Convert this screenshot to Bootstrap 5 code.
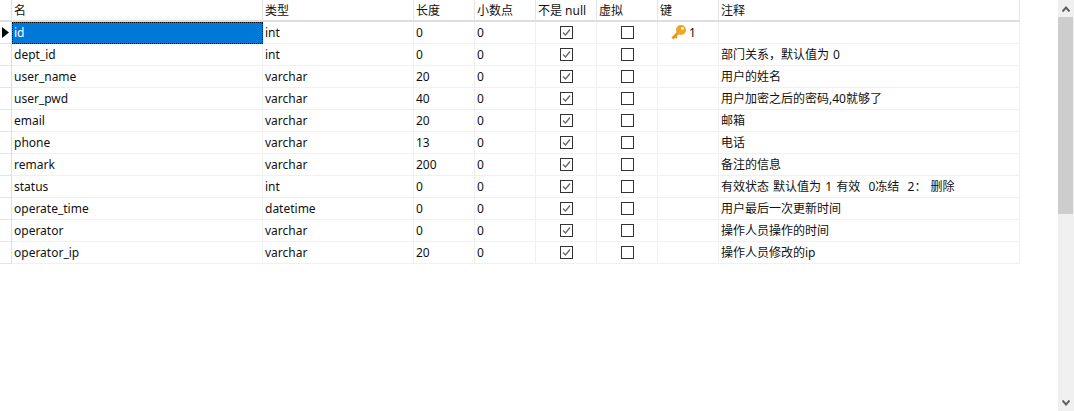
<!DOCTYPE html>
<html lang="zh">
<head>
<meta charset="utf-8">
<title>表设计</title>
<link href="https://cdn.jsdelivr.net/npm/bootstrap@5.3.0/dist/css/bootstrap.min.css" rel="stylesheet">
<style>
html,body{height:411px;overflow:hidden;background:#fff}
body{font-family:"Noto Sans","Noto Sans CJK SC",sans-serif;font-size:12px;color:#111}
.design-main{width:1058px}
.design-table{width:1020px;table-layout:fixed;border-collapse:separate;border-spacing:0;margin:0;color:#111}
.design-table th,.design-table td{height:22px;padding:0 0 0 2px;border-right:1px solid #f0f0f0;border-bottom:1px solid #f0f0f0;font-weight:400;line-height:21px;white-space:nowrap;overflow:hidden;vertical-align:middle}
.design-table th{border-bottom:2px solid #dedede;border-right-color:#e4e4e4;height:22px;line-height:19px;padding-top:1px;vertical-align:top}
.design-table th.row-head,.design-table td.row-head{padding:0;border-right:1px solid #dedede}
.design-table td.row-head{border-bottom-color:#e4e4e4}
.design-table td.sel{background:#0078d7;color:#fff;padding-left:1px;line-height:20px;border:1px dotted #000}
.design-table td.mid{text-align:center;padding:0}
.design-table td.keyc{padding:0 0 0 13px}
.design-table td.note{word-spacing:1px}
.design-table svg{display:block;margin:auto}
.design-table .keyc svg{display:inline-block;vertical-align:-3px;margin:0 3px 0 0}
.sb{width:16px;height:411px;background:#f0f0f0;padding-right:1px}
.sb-btn{height:17px;margin-right:-1px}
.sb-thumb{height:197px;background:#cdcdcd}
</style>
</head>
<body>
<svg width="0" height="0" class="position-absolute">
  <symbol id="cb-on" viewBox="0 0 13 13"><rect x=".5" y=".5" width="12" height="12" fill="#fff" stroke="#333"/><path d="M3 6.500 5.500 9 10 3.500" fill="none" stroke="#666" stroke-width="1.300"/></symbol>
  <symbol id="cb-off" viewBox="0 0 13 13"><rect x=".5" y=".5" width="12" height="12" fill="#fff" stroke="#333"/></symbol>
</svg>
<div class="d-flex justify-content-between">
  <div class="design-main">
    <table class="design-table">
      <colgroup><col style="width:12px"><col style="width:251px"><col style="width:151px"><col style="width:61px"><col style="width:61px"><col style="width:61px"><col style="width:61px"><col style="width:61px"><col style="width:301px"></colgroup>
      <thead><tr><th class="row-head"></th><th>名</th><th>类型</th><th>长度</th><th>小数点</th><th>不是 null</th><th>虚拟</th><th>键</th><th>注释</th></tr></thead>
      <tbody>
        <tr><td class="row-head"><svg width="7" height="11" viewBox="0 0 7 11"><path d="M0 0 7 5.500 0 11z" fill="#000"/></svg></td><td class="sel">id</td><td>int</td><td>0</td><td>0</td><td class="mid"><svg width="13" height="13"><use href="#cb-on"/></svg></td><td class="mid"><svg width="13" height="13"><use href="#cb-off"/></svg></td><td class="keyc"><svg width="15" height="15" viewBox="0 0 15 15"><path d="M7.500 7.500 1.500 13.500" fill="none" stroke="#e3991c" stroke-width="3"/><path d="M3.500 10.500 6 13" fill="none" stroke="#e3991c" stroke-width="2"/><circle cx="10" cy="5" r="5" fill="#eaa723"/><circle cx="11.500" cy="3.500" r="1.400" fill="#fff3c4"/></svg>1</td><td class="note"></td></tr>
        <tr><td class="row-head"></td><td>dept_id</td><td>int</td><td>0</td><td>0</td><td class="mid"><svg width="13" height="13"><use href="#cb-on"/></svg></td><td class="mid"><svg width="13" height="13"><use href="#cb-off"/></svg></td><td></td><td class="note">部门关系，默认值为 0</td></tr>
        <tr><td class="row-head"></td><td>user_name</td><td>varchar</td><td>20</td><td>0</td><td class="mid"><svg width="13" height="13"><use href="#cb-on"/></svg></td><td class="mid"><svg width="13" height="13"><use href="#cb-off"/></svg></td><td></td><td class="note">用户的姓名</td></tr>
        <tr><td class="row-head"></td><td>user_pwd</td><td>varchar</td><td>40</td><td>0</td><td class="mid"><svg width="13" height="13"><use href="#cb-on"/></svg></td><td class="mid"><svg width="13" height="13"><use href="#cb-off"/></svg></td><td></td><td class="note">用户加密之后的密码,40就够了</td></tr>
        <tr><td class="row-head"></td><td>email</td><td>varchar</td><td>20</td><td>0</td><td class="mid"><svg width="13" height="13"><use href="#cb-on"/></svg></td><td class="mid"><svg width="13" height="13"><use href="#cb-off"/></svg></td><td></td><td class="note">邮箱</td></tr>
        <tr><td class="row-head"></td><td>phone</td><td>varchar</td><td>13</td><td>0</td><td class="mid"><svg width="13" height="13"><use href="#cb-on"/></svg></td><td class="mid"><svg width="13" height="13"><use href="#cb-off"/></svg></td><td></td><td class="note">电话</td></tr>
        <tr><td class="row-head"></td><td>remark</td><td>varchar</td><td>200</td><td>0</td><td class="mid"><svg width="13" height="13"><use href="#cb-on"/></svg></td><td class="mid"><svg width="13" height="13"><use href="#cb-off"/></svg></td><td></td><td class="note">备注的信息</td></tr>
        <tr><td class="row-head"></td><td>status</td><td>int</td><td>0</td><td>0</td><td class="mid"><svg width="13" height="13"><use href="#cb-on"/></svg></td><td class="mid"><svg width="13" height="13"><use href="#cb-off"/></svg></td><td></td><td class="note">有效状态 默认值为 1 有效&nbsp; 0冻结&nbsp; 2： 删除</td></tr>
        <tr><td class="row-head"></td><td>operate_time</td><td>datetime</td><td>0</td><td>0</td><td class="mid"><svg width="13" height="13"><use href="#cb-on"/></svg></td><td class="mid"><svg width="13" height="13"><use href="#cb-off"/></svg></td><td></td><td class="note">用户最后一次更新时间</td></tr>
        <tr><td class="row-head"></td><td>operator</td><td>varchar</td><td>0</td><td>0</td><td class="mid"><svg width="13" height="13"><use href="#cb-on"/></svg></td><td class="mid"><svg width="13" height="13"><use href="#cb-off"/></svg></td><td></td><td class="note">操作人员操作的时间</td></tr>
        <tr><td class="row-head"></td><td>operator_ip</td><td>varchar</td><td>20</td><td>0</td><td class="mid"><svg width="13" height="13"><use href="#cb-on"/></svg></td><td class="mid"><svg width="13" height="13"><use href="#cb-off"/></svg></td><td></td><td class="note">操作人员修改的ip</td></tr>
      </tbody>
    </table>
  </div>
  <div class="sb d-flex flex-column">
    <div class="sb-btn d-flex align-items-center justify-content-center"><svg width="8" height="6" viewBox="0 0 8 6"><path d="M.5 5.500 4 1.500 7.500 5.500" fill="none" stroke="#606060" stroke-width="2"/></svg></div>
    <div class="sb-thumb"></div>
    <div class="flex-grow-1"></div>
    <div class="sb-btn d-flex align-items-center justify-content-center"><svg width="8" height="6" viewBox="0 0 8 6"><path d="M.5 .5 4 4.500 7.500 .5" fill="none" stroke="#606060" stroke-width="2"/></svg></div>
  </div>
</div>
</body>
</html>
